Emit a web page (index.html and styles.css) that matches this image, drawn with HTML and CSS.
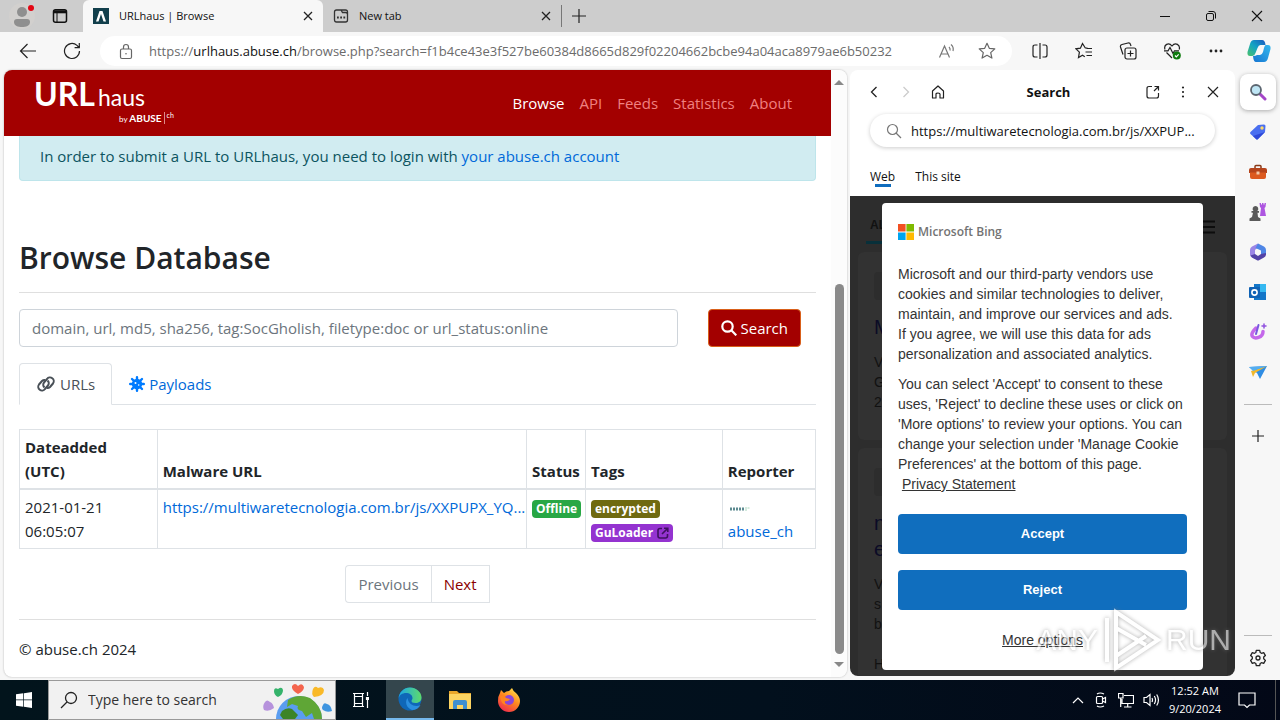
FILE: index.html
```html
<!DOCTYPE html>
<html lang="en">
<head>
  <meta charset="UTF-8" />
  <meta name="viewport" content="width=device-width, initial-scale=1" />
  <title>URLhaus | Browse</title>
  <link rel="stylesheet" href="styles.css">
</head>
<body>
  <header class="tabstrip">
    <button class="profile" aria-label="Profile">
      <svg width="28" height="28" viewBox="0 0 28 28"><circle cx="14" cy="14" r="13" fill="#d2d0ce"/><circle cx="14" cy="10" r="5" fill="#8f8f8f"/><path d="M6 20q0-3 3-3h10q3 0 3 3c0 4-4 5-8 5s-8-1-8-5z" fill="#8f8f8f"/><circle cx="23" cy="6" r="3" fill="#e30613"/></svg>
    </button>
    <button class="workspace" aria-label="Tab actions">
      <svg width="16" height="16" viewBox="0 0 16 16" fill="none" stroke="#111" stroke-width="1.5"><rect x="1.5" y="1.8" width="13" height="12.5" rx="2"/><path d="M2 3.8h12" stroke-width="3"/><path d="M5 5v9" stroke-width="1"/></svg>
    </button>
    <div class="tab active">
      <svg width="16" height="16" viewBox="0 0 16 16"><path fill="#123f4c" d="M0 0h16v16H0z"/><path d="M3 13.500 6.500 3h3L13 13.500h-2.500L8 6l-2.500 7.500z" fill="#fff"/></svg>
      <span>URLhaus | Browse</span>
      <button aria-label="Close tab"><svg width="10" height="10" viewBox="0 0 10 10" stroke="#222" stroke-width="1.3"><path d="M1 1l8 8M9 1l-8 8"/></svg></button>
    </div>
    <div class="tab">
      <svg width="16" height="16" viewBox="0 0 16 16" fill="none" stroke="#333" stroke-width="1.3"><path d="M3.500 2H8l1.500 2.500h3q2 0 2 2V12q0 2-2 2h-9q-2 0-2-2V4q0-2 2-2zM8 2h4.500q2 0 2 2v3"/><path d="M4 9.500h1.800M7.200 9.500H9M10.400 9.500h1.800" stroke-width="1.800"/></svg>
      <span>New tab</span>
      <button aria-label="Close tab"><svg width="10" height="10" viewBox="0 0 10 10" stroke="#222" stroke-width="1.3"><path d="M1 1l8 8M9 1l-8 8"/></svg></button>
    </div>
    <button class="new-tab" aria-label="New tab"><svg width="14" height="14" viewBox="0 0 14 14" stroke="#222" stroke-width="1.2"><path d="M7 0v14M0 7h14"/></svg></button>
    <div class="window-buttons">
      <button aria-label="Minimize"><svg width="10" height="10" viewBox="0 0 10 10" stroke="#111"><path d="M0 5.500h10"/></svg></button>
      <button aria-label="Restore"><svg width="12" height="12" viewBox="0 0 12 12" fill="none" stroke="#111"><rect x="1.500" y="3.500" width="7" height="7" rx="1.5"/><path d="M3.500 1.500H8q2.500 0 2.500 2.500v4.500"/></svg></button>
      <button aria-label="Close"><svg width="12" height="12" viewBox="0 0 12 12" stroke="#111" stroke-width="1.1"><path d="M1 1l10 10M11 1L1 11"/></svg></button>
    </div>
  </header>

  <nav class="toolbar">
    <button aria-label="Back"><svg width="18" height="16" viewBox="0 0 18 16" fill="none" stroke="#222" stroke-width="1.2"><path d="M17 8H1.500M8.500 1l-7 7 7 7"/></svg></button>
    <button aria-label="Refresh"><svg width="18" height="18" viewBox="0 0 18 18" fill="none" stroke="#222" stroke-width="1.2"><path d="M16.500 9a7.500 7.500 0 1 1-2.500-5.600L16 5.500M16.300 1v4.700h-4.700"/></svg></button>
    <div class="address">
      <svg width="14" height="17" viewBox="0 0 14 17" fill="none" stroke="#666" stroke-width="1.2"><rect x="1.500" y="6" width="11" height="9.500" rx="1.5"/><path d="M4.500 6V4a2.500 2.500 0 0 1 5 0v2"/><circle cx="7" cy="10.700" r=".8" fill="#666" stroke="none"/></svg>
      <div class="url" role="textbox" contenteditable="true" spellcheck="false" aria-label="Address">https://<b>urlhaus.abuse.ch</b>/browse.php?search=f1b4ce43e3f527be60384d8665d829f02204662bcbe94a04aca8979ae6b50232</div>
      <button aria-label="Read aloud"><svg width="18" height="16" viewBox="0 0 18 16" fill="none" stroke="#777" stroke-width="1.2"><path d="M1.500 14.500 6.500 3l5 11.500M3 11h7M11 4q1.500 1.500 1 3.500M13 1.500q3 2.500 2 6.500"/></svg></button>
      <button aria-label="Add to favorites"><svg width="18" height="18" viewBox="0 0 18 18" fill="none" stroke="#666" stroke-width="1.2"><path d="M9 1.300l2.300 5 5.500.6-4.100 3.700 1.200 5.500L9 13.300l-4.900 2.800 1.200-5.500L1.200 6.900l5.500-.6z" stroke-linejoin="round"/></svg></button>
    </div>
    <button aria-label="Split screen"><svg width="18" height="18" viewBox="0 0 18 18" fill="none" stroke="#222" stroke-width="1.2"><path d="M6.500 3H4Q2 3 2 5v8q0 2 2 2h2.500M11.500 3H14q2 0 2 2v8q0 2-2 2h-2.500M9 1v16"/></svg></button>
    <button aria-label="Favorites"><svg width="18" height="18" viewBox="0 0 18 18" fill="none" stroke="#222" stroke-width="1.2"><path d="M12.500 6H10.300L7.500 1.500 5.400 6.200 1 6.800l3.400 3.400-.9 5.300 4-2.300 2.300 1.500M11.500 6.500H17M10.500 10H17M11.500 13.500H17"/></svg></button>
    <button aria-label="Collections"><svg width="18" height="18" viewBox="0 0 18 18" fill="none" stroke="#222" stroke-width="1.2"><rect x="6" y="6" width="11" height="11" rx="2"/><path d="M11.500 8.500v6M8.500 11.500h6M4 12.500 1.500 5q-.5-2 1.500-2.500l6-1.500q2-.4 2.500 1.500L12 4"/></svg></button>
    <button aria-label="Browser essentials"><svg width="18" height="18" viewBox="0 0 18 18" fill="none" stroke="#222" stroke-width="1.2"><path d="M2 7.500C.5 3 5.500-.5 9 4c3.500-4.500 8.500-1 7.200 3.500M3.500 10.500 9 16M1 8.800h4L7 5.500l3 6 1.500-2.700H16"/><circle cx="13.800" cy="13.500" r="4" fill="#0f7b0f" stroke="none"/><path d="M12 13.500l1.300 1.300 2.400-2.500" stroke="#fff"/></svg></button>
    <button aria-label="Settings and more"><svg width="16" height="16" viewBox="0 0 16 16" fill="#222"><circle cx="3" cy="8" r="1.400"/><circle cx="8" cy="8" r="1.400"/><circle cx="13" cy="8" r="1.400"/></svg></button>
    <button aria-label="Copilot"><svg width="24" height="24" viewBox="0 0 24 24">
      <defs>
        <linearGradient id="cop1" x1="0" y1="1" x2="1" y2="0"><stop offset="0" stop-color="#4ac26b"/><stop offset=".5" stop-color="#12a3c4"/><stop offset="1" stop-color="#1b57c0"/></linearGradient>
        <linearGradient id="cop2" x1="0" y1="1" x2="1" y2="0"><stop offset="0" stop-color="#1675d1"/><stop offset="1" stop-color="#34b8ee"/></linearGradient>
      </defs>
      <path fill="url(#cop1)" d="M7 1h8q3 0 3.500 5h-5q-2 0-3 3l-2 5q-1 3-3 3H3q-3 0-2.500-4L3 5q1-4 4-4z"/>
      <path fill="url(#cop2)" d="M18.500 6H21q3 0 2.500 4L21 19q-1 4-4 4H9q-2.500 0-3-6 3 0 4-1h3q2 0 3-3l1-4q.5-2 1.500-3z"/></svg></button>
  </nav>

  <div class="workarea">
    <main class="page">
      <div class="page-scroll">
        <div class="navbar">
          <a class="brand" href="#">
            <span class="brand-name"><strong>URL</strong>haus</span>
            <span class="brand-by">by <b>ABUSE</b><sup>ch</sup></span>
          </a>
          <nav class="nav-links">
            <a class="current" href="#">Browse</a>
            <a href="#">API</a>
            <a href="#">Feeds</a>
            <a href="#">Statistics</a>
            <a href="#">About</a>
          </nav>
        </div>

        <div class="container">
          <div class="alert">In order to submit a URL to URLhaus, you need to login with <a href="#">your abuse.ch account</a></div>

          <h1>Browse Database</h1>
          <hr>

          <form class="search-form">
            <input type="text" aria-label="Search database" placeholder="domain, url, md5, sha256, tag:SocGholish, filetype:doc or url_status:online">
            <button type="button"><svg width="16" height="16" viewBox="0 0 16 16" fill="none" stroke="#fff" stroke-width="2.2"><circle cx="6.500" cy="6.500" r="5.200"/><path d="M10.300 10.300l5 5"/></svg> Search</button>
          </form>

          <ul class="nav-tabs">
            <li><a class="selected" href="#"><svg width="20" height="16" viewBox="0 0 20 16" fill="none" stroke="#495057" stroke-width="2"><path d="M8.500 11.500a3.600 3.600 0 0 1-.5-5l3-3.500a3.700 3.700 0 0 1 6 4.500l-3 3.500a3.600 3.600 0 0 1-3 1"/><path d="M11.500 4.500a3.600 3.600 0 0 1 .5 5L9 13a3.700 3.700 0 0 1-6-4.500L6 5a3.600 3.600 0 0 1 3-1"/></svg> URLs</a></li>
            <li><a href="#"><svg width="16" height="16" viewBox="0 0 16 16"><g stroke="#007bff" stroke-width="2.4" stroke-linecap="round"><path d="M8 1.200v13.600M1.200 8h13.600M3 3l10 10M13 3L3 13"/></g><circle cx="8" cy="8" r="5.200" fill="#007bff"/><circle cx="6.500" cy="7" r="1" fill="#fff"/><circle cx="9.700" cy="9" r=".8" fill="#fff"/></svg> Payloads</a></li>
          </ul>

          <table class="urls">
            <colgroup><col class="c-date"><col class="c-url"><col class="c-status"><col class="c-tags"><col class="c-reporter"></colgroup>
            <thead>
              <tr><th>Dateadded<br>(UTC)</th><th>Malware URL</th><th>Status</th><th>Tags</th><th>Reporter</th></tr>
            </thead>
            <tbody>
              <tr>
                <td>2021-01-21 06:05:07</td>
                <td><a href="#">https://multiwaretecnologia.com.br/js/XXPUPX_YQ...</a></td>
                <td><span class="badge offline">Offline</span></td>
                <td>
                  <span class="badge encrypted">encrypted</span><br>
                  <span class="badge guloader">GuLoader <svg width="12" height="12" viewBox="0 0 12 12" fill="none" stroke="#3f1060" stroke-width="1.6"><path d="M5 1.500H3Q1 1.500 1 3.500V9q0 2 2 2h5.500q2 0 2-2V7M5 7l5.500-5.500M7 1.200h3.800V5"/></svg></span>
                </td>
                <td><svg class="reporter-logo" width="24" height="16" viewBox="0 0 24 16"><path d="M2 8h14" stroke="#5c8a90" stroke-width="3" stroke-dasharray="2 1"/><path d="M18 6v4M19.500 7h2" stroke="#a9d6bd"/></svg><br><a href="#">abuse_ch</a></td>
              </tr>
            </tbody>
          </table>

          <div class="pagination">
            <button disabled>Previous</button>
            <button>Next</button>
          </div>
          <hr>
          <footer>© abuse.ch 2024</footer>
        </div>
      </div>
      <div class="scrollbar">
        <i class="arrow-up"></i>
        <i class="track"></i>
        <i class="thumb"></i>
        <i class="arrow-down"></i>
      </div>
    </main>

    <aside class="panel">
      <div class="panel-head">
        <button aria-label="Back"><svg width="12" height="12" viewBox="0 0 12 12" fill="none" stroke="#222" stroke-width="1.3"><path d="M8.500 1l-5 5 5 5"/></svg></button>
        <button aria-label="Forward"><svg width="12" height="12" viewBox="0 0 12 12" fill="none" stroke="#ccc" stroke-width="1.3"><path d="M3.500 1l5 5-5 5"/></svg></button>
        <button aria-label="Home"><svg width="14" height="14" viewBox="0 0 14 14" fill="none" stroke="#222" stroke-width="1.2"><path d="M1.500 6 7 1l5.500 5v7H9V9q0-1-2-1T5 9v4H1.500z" stroke-linejoin="round"/></svg></button>
        <strong>Search</strong>
        <button aria-label="Open in new tab"><svg width="14" height="14" viewBox="0 0 14 14" fill="none" stroke="#222" stroke-width="1.2"><path d="M6 1.500H3Q1 1.500 1 3.500V11q0 2 2 2h7.500q2 0 2-2V8M8.500 1.500h4v4M12.500 1.500 8 6"/></svg></button>
        <button aria-label="More"><svg width="14" height="14" viewBox="0 0 14 14" fill="#222"><circle cx="7" cy="2.500" r="1.100"/><circle cx="7" cy="7" r="1.100"/><circle cx="7" cy="11.500" r="1.100"/></svg></button>
        <button aria-label="Close panel"><svg width="12" height="12" viewBox="0 0 12 12" stroke="#222" stroke-width="1.2"><path d="M1 1l10 10M11 1L1 11"/></svg></button>
      </div>
      <label class="panel-search">
        <svg width="16" height="16" viewBox="0 0 16 16" fill="none" stroke="#777" stroke-width="1.2"><circle cx="6.500" cy="6.500" r="5"/><path d="M10 10l5 5"/></svg>
        <input type="text" aria-label="Search the web" value="https://multiwaretecnologia.com.br/js/XXPUP...">
      </label>
      <div class="panel-tabs">
        <a class="on" href="#">Web</a>
        <a href="#">This site</a>
      </div>

      <div class="bing">
        <div class="bing-top"><b>AL</b><svg width="14" height="14" viewBox="0 0 14 14" stroke="#0d0d0d" stroke-width="2"><path d="M0 1.500h14M0 7h14M0 12.500h14"/></svg></div>
        <article class="first">
          <i class="site"></i>
          <h2>M</h2>
          <p>V<br>G<br>2</p>
        </article>
        <article>
          <i class="site"></i>
          <h2>n<br>e</h2>
          <p>V<br>s<br>b</p>
          <p>H</p>
        </article>

        <section class="consent">
          <div class="ms-logo">
            <svg width="16" height="16" viewBox="0 0 16 16"><path fill="#f25022" d="M0 0h7.600v7.600H0z"/><path fill="#7fba00" d="M8.400 0H16v7.600H8.400z"/><path fill="#00a4ef" d="M0 8.400h7.600V16H0z"/><path fill="#ffb900" d="M8.400 8.400H16V16H8.400z"/></svg>
            Microsoft Bing
          </div>
          <p>Microsoft and our third-party vendors use cookies and similar technologies to deliver, maintain, and improve our services and ads.<br>If you agree, we will use this data for ads personalization and associated analytics.</p>
          <p>You can select 'Accept' to consent to these uses, 'Reject' to decline these uses or click on 'More options' to review your options. You can change your selection under 'Manage Cookie Preferences' at the bottom of this page. &nbsp;<a href="#">Privacy Statement</a></p>
          <button>Accept</button>
          <button>Reject</button>
          <a class="more" href="#">More options</a>
        </section>
      </div>
    </aside>

    <nav class="sidebar">
      <button class="on" aria-label="Search"><svg width="18" height="18" viewBox="0 0 18 18"><path d="M11 11l5 5" stroke="#a446c8" stroke-width="3" stroke-linecap="round"/><circle cx="7" cy="7" r="5" fill="#bfe6f5" stroke="#5c6670" stroke-width="1.8"/></svg></button>
      <button aria-label="Shopping"><svg width="18" height="18" viewBox="0 0 18 18"><path d="M9 2l6-.5q1.500 0 1.500 1.500l-.5 6-7 7q-1 1-2 0L1.500 11q-1-1 0-2z" fill="#4a6ff0"/><path d="M16 9l-7 7q-1 1-2 0l-3-3z" fill="#2f49d8"/><circle cx="13" cy="5" r="1.700" fill="#ffd966"/></svg></button>
      <button aria-label="Tools"><svg width="18" height="18" viewBox="0 0 18 18"><path d="M6 5V3.500q0-1 1-1h4q1 0 1 1V5" fill="none" stroke="#8a3a18" stroke-width="1.5"/><path d="M2 5h14q2 0 2 2v3H0V7q0-2 2-2z" fill="#b5441c"/><path d="M1 9.500h16V14q0 2-2 2H3q-2 0-2-2z" fill="#dc5a20"/><path d="M7.500 8.500h3v3h-3z" fill="#f3c9a8"/></svg></button>
      <button aria-label="Games"><svg width="18" height="18" viewBox="0 0 18 18"><path d="M10.500 0H12v1.500h1V0h1.500v1.500h1V0H17l-.5 4-1 1 1.500 8h-6l1-8-1-1z" fill="#ad56e0"/><path d="M6.500 3a2.900 2.900 0 0 1 1.900 5H10v1.700H8.500l.5 4.300 2.500 1.500V18H.5v-2.500L3 14l1-4.300H2.500V8h2a2.900 2.900 0 0 1 2-5z" fill="#5a5a5a"/></svg></button>
      <button aria-label="Microsoft 365"><svg width="18" height="18" viewBox="0 0 18 18"><path fill="#9b86e6" d="M9 .5 3 3.500Q1 4.500 1 7v4.500q0 2 2 3l3 1.500V7.500q0-1 1-1.500l4-2.500z"/><path fill="#4f86e6" d="M9 .5l6 3q2 1 2 3.500v4l-5 2.500V7.500L6.500 5z"/><path fill="#5343a6" d="M17 10v1.500q0 2-2 3l-5 2.700q-1 .5-2 0L3 14.500l-1.500-2L6 11l3 2 3-2z"/></svg></button>
      <button aria-label="Outlook"><svg width="18" height="18" viewBox="0 0 18 18"><path fill="#35b8f1" d="M5 1h12v16H5z"/><path fill="#1376c8" d="M5 1h6v8h6v8H5z"/><rect y="4" width="11" height="11" rx="1" fill="#0f62b5"/><circle cx="5.500" cy="9.500" r="2.600" fill="none" stroke="#fff" stroke-width="1.6"/></svg></button>
      <button aria-label="Designer"><svg width="18" height="18" viewBox="0 0 18 18" fill="none" stroke-linecap="round"><path d="M7 5C4 8 1.500 11 3.500 13.500S14 15 14 8.500" stroke="#c468ea" stroke-width="3.5"/><path d="M7 11 9.500 2" stroke="#7758e0" stroke-width="2"/><path d="M15 1v4M13 3h4" stroke="#9152df" stroke-width="1.5"/></svg></button>
      <button aria-label="Drop"><svg width="18" height="18" viewBox="0 0 18 18"><path fill="#2f8de4" d="M0 4l18-1-7 13-3-6z"/><path fill="#f1b82c" d="M2 8 18 3 6 10l-2 4z"/><path fill="#55aef0" d="M0 4l18-1L4 8z"/></svg></button>
      <hr>
      <button aria-label="Customize"><svg width="14" height="14" viewBox="0 0 14 14" stroke="#222" stroke-width="1.2"><path d="M7 1v12M1 7h12"/></svg></button>
      <div class="spacer"></div>
      <hr>
      <button aria-label="Settings"><svg width="18" height="18" viewBox="0 0 18 18" fill="none" stroke="#222" stroke-width="1.3" stroke-linejoin="round"><path d="M7.300 1.300h3.400l.5 2.200 1.300.8 2.200-.7 1.700 3-1.700 1.500v1.700l1.700 1.600-1.700 3-2.200-.7-1.300.8-.5 2.200H7.300l-.5-2.200-1.300-.8-2.200.7-1.700-3 1.700-1.600V8.100L1.600 6.600l1.700-3 2.200.7 1.300-.8z"/><circle cx="9" cy="9" r="2"/></svg></button>
    </nav>

    <div class="watermark">
      <span>ANY</span>
      <svg width="60" height="64" viewBox="0 0 60 64" fill="none" stroke="#fff" stroke-width="4"><path d="M14 4v56l42-28zM5 10v44M14 20l30 17M14 48l30-20"/></svg>
      <span>RUN</span>
    </div>
  </div>

  <div class="taskbar">
    <button class="start" aria-label="Start"><svg width="16" height="16" viewBox="0 0 16 16" fill="#fff"><path d="M0 2.300 7.300 1.300v6.300H0zM8 1.200 16 0v7.600H8zM0 8.300h7.300v6.400L0 13.700zM8 8.300h8V16l-8-1.200z"/></svg></button>
    <label class="task-search">
      <svg width="18" height="18" viewBox="0 0 18 18" fill="none" stroke="#222" stroke-width="1.3"><circle cx="11" cy="7" r="5.500"/><path d="M7 11l-6 6"/></svg>
      <input type="text" aria-label="Search Windows" placeholder="Type here to search">
      <svg width="72" height="38" viewBox="0 0 72 38">
        <circle cx="38" cy="38" r="23" fill="#5a9df0"/>
        <path d="M27 19q10-7 22-2 12 8 12 21h-8l-2-6-6 4-4-6q-6-1-4-5l-6-2-5 3z" fill="#5fa636"/><path d="M21 30q5-4 10-2l6 6-3 4H22l-3-4z" fill="#3c8427"/>
        <path d="M31 5q3-4 6 0 4-4 6 1 0 4-6 7-7-4-6-8z" fill="#f4644d"/>
        <path d="M13 10q0-4 4-2 4-3 5 1 0 5-5 7-4-2-4-6z" fill="#35b36b"/>
        <path d="M52 8q2-4 5-1 5-2 6 2 0 6-10 7-3-3-1-8z" fill="#f9b928"/>
        <path d="M4 21q2-3 5 0 3 1 4 6-5 4-10 2-2-4 1-8z" fill="#b692dc"/>
        <path d="M62 24q1-3 4-1 4 1 5 7-5 2-9-1-2-2 0-5z" fill="#3f95e0"/>
      </svg>
    </label>
    <button class="app" aria-label="Task view"><svg width="16" height="16" viewBox="0 0 16 16" fill="none" stroke="#fff" stroke-width="1.2"><path d="M0 1.500h11M0 14.500h11M1.500 1v3M9.500 1v3M1.500 12v3M9.500 12v3M1.500 4.500h8v7h-8zM14.500 0v4M14.500 8v8"/><path d="M13.500 5.500h2v2h-2z" fill="#fff"/></svg></button>
    <button class="app running" aria-label="Microsoft Edge"><svg width="24" height="24" viewBox="0 0 24 24">
      <defs><linearGradient id="edge" x1="0" x2="1" y1="0" y2="0"><stop offset="0" stop-color="#1ba6e8"/><stop offset="1" stop-color="#5edb6a"/></linearGradient></defs>
      <circle cx="12" cy="12" r="11.500" fill="#0f67b8"/><path d="M.5 12C1 5 6 .5 12 .5S23.500 5 23.500 10.500c0 4-3 5.500-6 5.500s-4-1-4-2 1-1.500 1-3c0-3-3-5-6.500-5S1 8 .5 12z" fill="url(#edge)"/><path d="M9.500 11c-3 4-1 10 4.500 12 4 0 7-2 8.500-5-5 2.500-12 0-13-7z" fill="#2b8fe0"/></svg></button>
    <button class="app" aria-label="File Explorer"><svg width="22" height="20" viewBox="0 0 22 20"><path fill="#e9a72b" d="M0 1h8l2 2h12v5H0z"/><path fill="#fcd462" d="M0 4h22v15H0z"/><path fill="#3f8fd0" d="M4 12q0-2 2-2h10q2 0 2 2v7h-4v-4H8v4H4z"/></svg></button>
    <button class="app" aria-label="Firefox"><svg width="24" height="24" viewBox="0 0 24 24">
      <defs><linearGradient id="fox" x1=".8" x2=".2" y1="0" y2="1"><stop offset="0" stop-color="#ffe14d"/><stop offset=".45" stop-color="#ff8a1f"/><stop offset="1" stop-color="#f0264f"/></linearGradient></defs>
      <path d="M3 5l1-3 3 3q2-2 5-2l3-3q1 3 4 5 4 4 4 8a11 11 0 0 1-22 0q0-5 2-8z" fill="url(#fox)"/><circle cx="12" cy="12" r="5" fill="#8a46d8"/><path d="M3 8q5-1 6 2l4 1q-2 3-5 2-1 3 3 4-7 1-8-9z" fill="#ff8420"/></svg></button>
    <div class="tray">
      <svg width="12" height="8" viewBox="0 0 12 8" fill="none" stroke="#fff" stroke-width="1.2"><path d="M1 7l5-5 5 5"/></svg>
      <svg width="16" height="16" viewBox="0 0 16 16" fill="none" stroke="#fff" stroke-width="1.2"><rect x="3.500" y="4.500" width="6" height="7" rx="1"/><path d="M9.500 7l3-1.500v5L9.500 9M4 2q3-2 7 0M4 14q3 2 7 0"/></svg>
      <svg width="16" height="16" viewBox="0 0 16 16" fill="none" stroke="#fff" stroke-width="1.2"><path d="M6 3.500h9.500v8H4V7M9.700 11.500V15M6 15h7.500M.5 1.500H5V6H.5zM2.700 6v9"/></svg>
      <svg width="17" height="16" viewBox="0 0 17 16" fill="none" stroke="#fff" stroke-width="1.2"><path d="M1 5.500h2.500L7 2.500v11l-3.500-3H1zM9 6q1 2 0 4M11.300 4q2.500 4 0 8M13.700 2.500q3.500 5.500 0 11"/></svg>
      <time>12:52 AM<br>9/20/2024</time>
      <svg class="notify" width="18" height="17" viewBox="0 0 18 17" fill="none" stroke="#fff" stroke-width="1.2"><path d="M1 1h16v12h-5.500L9 15.500 6.500 13H1z"/></svg>
    </div>
  </div>
</body>
</html>
```
FILE: styles.css
```css
* {
  box-sizing: border-box;
}
body {
  margin: 0;
  height: 100vh;
  display: flex;
  flex-direction: column;
  overflow: hidden;
  background: #f7f7f7;
  color: #212529;
  font-family: "Open Sans", "Noto Sans", sans-serif;
  font-size: 15px;
  line-height: 24px;
}
button, input {
  font: inherit;
  color: inherit;
}
button {
  display: flex;
  align-items: center;
  justify-content: center;
  padding: 0;
  border: 0;
  background: none;
}
input {
  min-width: 0;
  outline: 0;
}
svg {
  flex: none;
}
a {
  color: #0069d9;
  text-decoration: none;
}
hr {
  width: 100%;
  margin: 0;
  border: 0;
  border-top: 1px solid #dfdfdf;
}

/* tab strip */
.tabstrip {
  display: flex;
  flex: none;
  height: 32px;
  background: #cdcdcd;
  color: #111;
  font-size: 11px;
}
.profile {
  width: 44px;
}
.workspace {
  width: 32px;
  margin-right: 7px;
}
.tab {
  display: flex;
  align-items: center;
  gap: 10px;
  width: 240px;
  padding: 0 10px;
}
.tab + .tab {
  width: 239px;
  border-right: 1px solid #888;
  border-image: linear-gradient(transparent 6px, #777 6px, #777 26px, transparent 26px) 1;
}
.tab.active {
  background: #f7f7f7;
  border-radius: 6px 6px 0 0;
}
.tab span {
  flex: 1;
}
.new-tab {
  width: 34px;
}
.window-buttons {
  display: flex;
  margin-left: auto;
}
.window-buttons button {
  width: 46px;
}

/* toolbar */
.toolbar {
  display: flex;
  flex: none;
  align-items: center;
  height: 38px;
  padding-left: 6px;
}
.toolbar > button {
  width: 44px;
}
.toolbar > button:last-child {
  width: 42px;
}
.address {
  display: flex;
  flex: 1;
  align-items: center;
  min-width: 0;
  height: 30px;
  margin: 0 6px;
  padding: 0 5px 0 19px;
  border-radius: 15px;
  background: #fff;
}
.url {
  flex: 1;
  min-width: 0;
  margin-left: 16px;
  overflow: hidden;
  white-space: nowrap;
  font-size: 13px;
  color: #6b6b6b;
  outline: 0;
}
.url b {
  font-weight: 400;
  color: #111;
}
.address button {
  width: 40px;
}

.workarea {
  position: relative;
  display: flex;
  flex: 1;
  min-height: 0;
  padding-left: 4px;
}

/* main page */
.page {
  display: flex;
  flex: 1;
  min-width: 0;
  margin: 0 3px 3px 0;
  overflow: hidden;
  border-radius: 8px;
  background: #fff;
  box-shadow: 0 0 2px #aaa;
}
.page-scroll {
  flex: 1;
  min-width: 0;
}
.navbar {
  display: flex;
  align-items: center;
  justify-content: space-between;
  height: 66px;
  padding: 0 30px;
  background: #a30000;
}
.brand {
  display: flex;
  flex-direction: column;
  color: #fff;
}
.brand-name {
  font-family: Lato, sans-serif;
  font-size: 23px;
  line-height: 28px;
}
.brand-name strong {
  font-size: 32px;
  margin-right: 3px;
}
.brand-by {
  padding-left: 85px;
  font-family: Lato, sans-serif;
  font-size: 8px;
  line-height: 14px;
}
.brand-by b {
  font-size: 10px;
  padding-right: 2px;
  border-right: 1px solid #d88;
}
.brand-by sup {
  margin-left: 2px;
  font-size: 7px;
  line-height: 0;
}
.nav-links {
  display: flex;
  gap: 15px;
  padding-right: 9px;
}
.nav-links a {
  color: #f08080;
}
.nav-links .current {
  color: #fff;
}
.container {
  padding: 0 15px;
}
.alert {
  height: 45px;
  padding: 8px 20px;
  border: 1px solid #bee5eb;
  border-top: 0;
  border-radius: 0 0 4px 4px;
  background: #d1ecf1;
  color: #0c5460;
}
h1 {
  margin: 57px 0 14px;
  font-size: 30px;
  font-weight: 600;
  line-height: 40px;
}
.search-form {
  display: flex;
  gap: 30px;
  margin: 16px 15px 16px 0;
}
.search-form input {
  flex: 1;
  height: 38px;
  padding: 0 12px;
  border: 1px solid #ced4da;
  border-radius: 4px;
}
.search-form input::placeholder {
  color: #6c757d;
}
.search-form button {
  gap: 4px;
  height: 38px;
  padding: 0 12px;
  border: 1px solid #d9601a;
  border-radius: 4px;
  background: #a30000;
  color: #fff;
}
.nav-tabs {
  display: flex;
  margin: 0 0 24px;
  padding: 0;
  border-bottom: 1px solid #dee2e6;
  list-style: none;
}
.nav-tabs a {
  display: flex;
  align-items: center;
  gap: 4px;
  height: 42px;
  margin-bottom: -1px;
  padding: 0 16px;
  border: 1px solid transparent;
}
.nav-tabs .selected {
  border-color: #dee2e6 #dee2e6 #fff;
  border-radius: 4px 4px 0 0;
  background: #fff;
  color: #495057;
}
.urls {
  width: 100%;
  table-layout: fixed;
  border-collapse: collapse;
}
.c-date { width: 17.3%; }
.c-url { width: 46.4%; }
.c-status { width: 7.4%; }
.c-tags { width: 17.2%; }
.c-reporter { width: 11.7%; }
.urls th, .urls td {
  padding: 5px;
  border: 1px solid #dee2e6;
  text-align: left;
  vertical-align: top;
}
.urls th {
  border-bottom-width: 2px;
  vertical-align: bottom;
}
.urls td {
  white-space: nowrap;
}
.urls td:first-child {
  white-space: normal;
}
.badge {
  display: inline-flex;
  align-items: center;
  gap: 4px;
  height: 18px;
  padding: 0 4px;
  border-radius: 4px;
  color: #fff;
  font-size: 12px;
  font-weight: 700;
  line-height: 18px;
}
.offline { background: #28a745; }
.encrypted { background: #6f6a10; }
.guloader { background: #9433d0; }
.reporter-logo {
  vertical-align: middle;
}
.pagination {
  display: flex;
  justify-content: center;
  margin: 16px 0;
}
.pagination button {
  height: 38px;
  padding: 0 12px;
  border: 1px solid #dee2e6;
  color: #8b0000;
}
.pagination button:first-child {
  border-right: 0;
  border-radius: 4px 0 0 4px;
  color: #6c757d;
}
footer {
  margin-top: 17px;
}
.scrollbar {
  display: flex;
  flex-direction: column;
  align-items: center;
  width: 16px;
  padding: 10px 0;
  background: #fcfcfc;
}
.arrow-up, .arrow-down {
  border: 5px solid transparent;
}
.arrow-up {
  border-top: 0;
  border-bottom-color: #888;
}
.arrow-down {
  margin-top: 8px;
  border-bottom: 0;
  border-top-color: #888;
}
.track {
  flex: 35 0 0;
}
.thumb {
  flex: 65 0 0;
  width: 9px;
  border-radius: 5px;
  background: #8a8a8a;
}

/* search panel */
.panel {
  display: flex;
  flex-direction: column;
  flex: none;
  width: 385px;
  margin-bottom: 4px;
  overflow: hidden;
  border-radius: 8px;
  background: #fff;
  color: #111;
}
.panel-head {
  display: flex;
  align-items: center;
  height: 44px;
  padding: 0 7px 0 8px;
}
.panel-head button {
  width: 30px;
}
.panel-head button:nth-child(-n+3) {
  width: 32px;
}
.panel-head strong {
  flex: 1;
  padding-left: 5px;
  text-align: center;
  font-size: 13px;
}
.panel-search {
  display: flex;
  align-items: center;
  gap: 9px;
  height: 33px;
  margin: 0 20px;
  padding: 0 16px;
  border-radius: 17px;
  box-shadow: 0 1px 4px #ccc;
}
.panel-search input {
  flex: 1;
  padding: 0;
  border: 0;
  font-size: 13px;
}
.panel-tabs {
  display: flex;
  gap: 20px;
  height: 49px;
  padding: 18px 20px 0;
  font-size: 12px;
}
.panel-tabs a {
  height: 22px;
  color: #111;
}
.panel-tabs .on {
  background: linear-gradient(#0f6cbd, #0f6cbd) center bottom / 16px 3px no-repeat;
}
.bing {
  position: relative;
  flex: 1;
  min-height: 0;
  overflow: hidden;
  padding: 0 8px;
  background: #2d2d2d;
  color: #111;
  font-family: "Liberation Sans", sans-serif;
  font-size: 14px;
  line-height: 20px;
}
.bing-top {
  display: flex;
  align-items: center;
  justify-content: space-between;
  height: 56px;
  padding: 6px 12px 0;
  font-size: 12px;
}
.bing-top b {
  padding: 4px 4px 6px;
  margin-left: -4px;
  border-bottom: 3px solid #08303a;
}
.bing article {
  height: 240px;
  margin-bottom: 8px;
  padding: 20px 16px;
  border-radius: 6px;
  background: #323232;
}
.bing .first {
  height: 188px;
}
.site {
  display: block;
  width: 28px;
  height: 28px;
  border-radius: 4px;
  background: #2d2d2d;
}
.bing h2 {
  margin: 14px 0 12px;
  color: #0b0b26;
  font-size: 20px;
  font-weight: 400;
  line-height: 26px;
}
.bing article p {
  margin: 0 0 20px;
}
.consent {
  position: absolute;
  top: 7px;
  left: 32px;
  right: 32px;
  bottom: 6px;
  padding: 16px;
  border-radius: 4px;
  background: #fff;
  color: #333;
}
.ms-logo {
  display: flex;
  align-items: center;
  gap: 4px;
  height: 26px;
  margin-bottom: 19px;
  color: #737373;
  font: 600 12px/26px "Open Sans", sans-serif;
}
.consent p {
  margin: 0 0 10px;
}
.consent a {
  color: #333;
  text-decoration: underline;
}
.consent button {
  width: 100%;
  height: 40px;
  margin: 20px 0 16px;
  border-radius: 4px;
  background: #106ebe;
  color: #fff;
  font-size: 13px;
  font-weight: 700;
}
.consent button + button {
  margin: 0 0 20px;
}
.consent .more {
  display: block;
  text-align: center;
}

/* edge sidebar */
.sidebar {
  display: flex;
  flex: none;
  flex-direction: column;
  align-items: center;
  width: 45px;
  padding: 2px 0;
}
.sidebar button {
  width: 36px;
  height: 40px;
}
.sidebar .on {
  height: 36px;
  margin: 2px 0;
  border-radius: 8px;
  background: #fff;
  box-shadow: 0 1px 4px #aaa;
}
.sidebar hr {
  width: 28px;
  margin: 12px 0 11px;
  border-color: #bbb;
}
.sidebar hr:last-of-type {
  margin: 0 0 2px;
}
.spacer {
  flex: 1;
}
.watermark {
  position: absolute;
  right: 49px;
  bottom: 8px;
  display: flex;
  align-items: center;
  gap: 4px;
  color: #fff;
  font: 30px "Liberation Sans", sans-serif;
  opacity: .6;
  filter: drop-shadow(0 0 2px #777);
  pointer-events: none;
}

/* taskbar */
.taskbar {
  display: flex;
  flex: none;
  height: 40px;
  background: linear-gradient(90deg, #02141c, #02101d 60%, #030817);
  color: #fff;
}
.start {
  width: 48px;
}
.task-search {
  display: flex;
  align-items: center;
  gap: 10px;
  width: 288px;
  padding: 0 2px 0 11px;
  border: 1px solid #999;
  background: #f1f1f1;
}
.task-search input {
  flex: 1;
  padding: 0;
  border: 0;
  background: none;
  font-size: 14px;
}
.task-search input::placeholder {
  color: #333;
}
.app {
  width: 49px;
}
.running {
  width: 48px;
  margin: 0 1px;
  border-bottom: 2px solid #76b9ed;
  background: #34464d;
}
.tray {
  display: flex;
  align-items: center;
  gap: 9px;
  margin-left: auto;
  margin-right: 4px;
  padding-right: 19px;
  border-right: 1px solid #555;
}
.tray time {
  font-size: 11px;
  line-height: 18px;
  text-align: center;
}
.notify {
  margin-left: 8px;
}
```
